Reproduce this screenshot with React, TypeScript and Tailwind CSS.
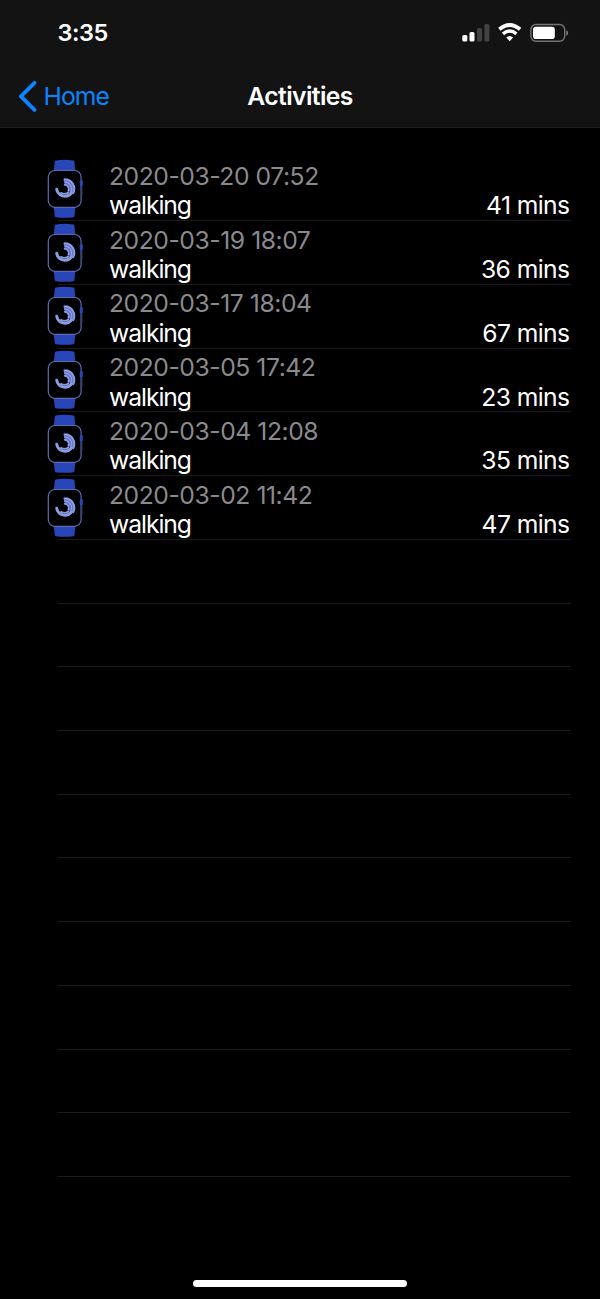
const activities = [
  { date: '2020-03-20 07:52', type: 'walking', duration: '41 mins' },
  { date: '2020-03-19 18:07', type: 'walking', duration: '36 mins' },
  { date: '2020-03-17 18:04', type: 'walking', duration: '67 mins' },
  { date: '2020-03-05 17:42', type: 'walking', duration: '23 mins' },
  { date: '2020-03-04 12:08', type: 'walking', duration: '35 mins' },
  { date: '2020-03-02 11:42', type: 'walking', duration: '47 mins' },
];

const emptyRows = Array.from({ length: 10 }, (_, i) => i);

function WatchIcon() {
  return (
    <svg width="38" height="60" viewBox="0 0 38 60" fill="none" aria-hidden="true">
      <path d="M8.600 1.400Q17.500 .2 26.700 1.400Q27.500 1.600 27.600 4Q27.700 8 28.500 12H6.500Q7.500 8 7.600 4Q7.700 1.600 8.600 1.400Z" fill="#2846b8" />
      <path d="M6.500 48H28.500Q27.700 52 27.600 56Q27.500 58 26.700 58.200Q17.500 59.400 8.600 58.200Q7.700 58 7.600 56Q7.500 52 6.500 48Z" fill="#2846b8" />
      <rect x="1.300" y="11.500" width="32.800" height="36.800" rx="6.500" fill="#000" stroke="#5a6cae" strokeWidth="1.200" />
      <rect x="32.800" y="21" width="3" height="6.500" rx="1.200" fill="#2846b8" />
      <path d="M34.900 28V36" stroke="#34406f" strokeWidth="1" />
      <path d="M17.300 23.200A6.400 6.400 0 0 1 23.300 33.300" stroke="#6073c8" strokeWidth="7" />
      <g stroke="#8c9be0" strokeLinecap="round">
        <path d="M17.500 20.600A9.200 9.200 0 0 1 26.200 34" strokeWidth="2" />
        <path d="M17.500 23.200A6.600 6.600 0 0 1 24 32.500" strokeWidth="1.300" />
        <path d="M24.200 34.200A8.300 8.300 0 0 1 9.700 30.300" strokeWidth="3" />
        <path d="M17.500 25.800A4.200 4.200 0 0 1 21.200 32" strokeWidth="1.500" />
        <path d="M21.500 33.500Q18 36 14 33.800" strokeWidth="1.700" />
      </g>
    </svg>
  );
}

function StatusBar() {
  return (
    <div className="flex h-[65px] items-start justify-between pr-[30px] pl-[57.500px]">
      <span className="mt-[18px] text-[23.500px] leading-[30px] font-semibold tracking-[-0.500px]">3:35</span>
      <div className="mt-[22px] flex h-[22px] items-center">
        <svg width="28" height="22" viewBox="0 0 28 22" aria-hidden="true">
          <rect x="0.300" y="13" width="5" height="6.500" rx="1.500" fill="#fff" />
          <rect x="7.500" y="10" width="5" height="9.500" rx="1.500" fill="#fff" />
          <rect x="15" y="6" width="5" height="13.500" rx="1.500" fill="#424242" />
          <rect x="22.400" y="2" width="5" height="17.500" rx="1.500" fill="#424242" />
        </svg>
        <svg className="ml-[8px]" width="24" height="22" viewBox="0 0 24 22" fill="none" aria-hidden="true">
          <path d="M1.300 7.300Q11.700 -1.300 22.100 7.300" stroke="#fff" strokeWidth="3.700" />
          <path d="M5 11.900Q11.700 6.300 18.400 11.900" stroke="#fff" strokeWidth="3.400" />
          <path d="M8.300 15.500Q11.700 12.500 15.100 15.500L11.700 19.300Z" fill="#fff" />
        </svg>
        <svg className="ml-[8px]" width="40" height="22" viewBox="0 0 40 22" fill="none" aria-hidden="true">
          <rect x="0.900" y="2.500" width="33.800" height="16.800" rx="5" stroke="#747474" strokeWidth="1.400" />
          <rect x="3" y="4.800" width="21.800" height="12.200" rx="2.800" fill="#fff" />
          <path d="M36.200 8.200Q38.200 8.900 38.200 11Q38.200 13.100 36.200 13.800Z" fill="#747474" />
        </svg>
      </div>
    </div>
  );
}

function NavBar() {
  return (
    <div className="grid h-[61px] grid-cols-[1fr_auto_1fr] items-center">
      <button className="flex items-center pl-[18px] text-[24.700px] leading-[32px] tracking-[-0.900px] text-[#0a84ff]">
        <svg className="mr-[6.500px]" width="19" height="32" viewBox="0 0 19 32" fill="none" aria-hidden="true">
          <path d="M16.500 2.800L2.900 16.300L16.500 29.800" stroke="currentColor" strokeWidth="3.800" strokeLinecap="round" strokeLinejoin="round" />
        </svg>
        Home
      </button>
      <h1 className="text-[24.700px] leading-[32px] font-semibold tracking-[-0.600px]">Activities</h1>
      <span />
    </div>
  );
}

export default function App() {
  return (
    <div className="flex h-[1299px] w-[600px] flex-col overflow-hidden bg-black font-['Inter','Liberation_Sans',sans-serif] text-white">
      <header className="h-[128px] shrink-0 border-b border-[#1a1a1a] bg-[#131313]">
        <StatusBar />
        <NavBar />
      </header>
      <main className="flex flex-1 flex-col pt-[29.400px]">
        {activities.map((activity) => (
          <div key={activity.date} className="flex h-[63.740px] shrink-0 flex-col">
            <div className="flex h-[62.740px] pt-[1.500px] pr-[30.500px] pl-[47px]">
              <WatchIcon />
              <div className="ml-[24px] flex flex-1 flex-col pt-[3.100px] text-[24.700px] leading-[29.500px]">
                <span className="tracking-[-0.450px] text-[#8a8a8e]">{activity.date}</span>
                <div className="flex justify-between">
                  <span className="tracking-[-1.050px]">{activity.type}</span>
                  <span className="tracking-[-0.600px]">{activity.duration}</span>
                </div>
              </div>
            </div>
            <div className="mr-[29px] ml-[58px] h-px bg-[#1b1b1c]" />
          </div>
        ))}
        {emptyRows.map((row) => (
          <div key={row} className="flex h-[63.740px] shrink-0 flex-col justify-end">
            <div className="mr-[29px] ml-[58px] h-px bg-[#1b1b1c]" />
          </div>
        ))}
      </main>
      <footer className="flex shrink-0 justify-center pb-[12px]">
        <div className="h-[7.500px] w-[214px] rounded-full bg-white" />
      </footer>
    </div>
  );
}
